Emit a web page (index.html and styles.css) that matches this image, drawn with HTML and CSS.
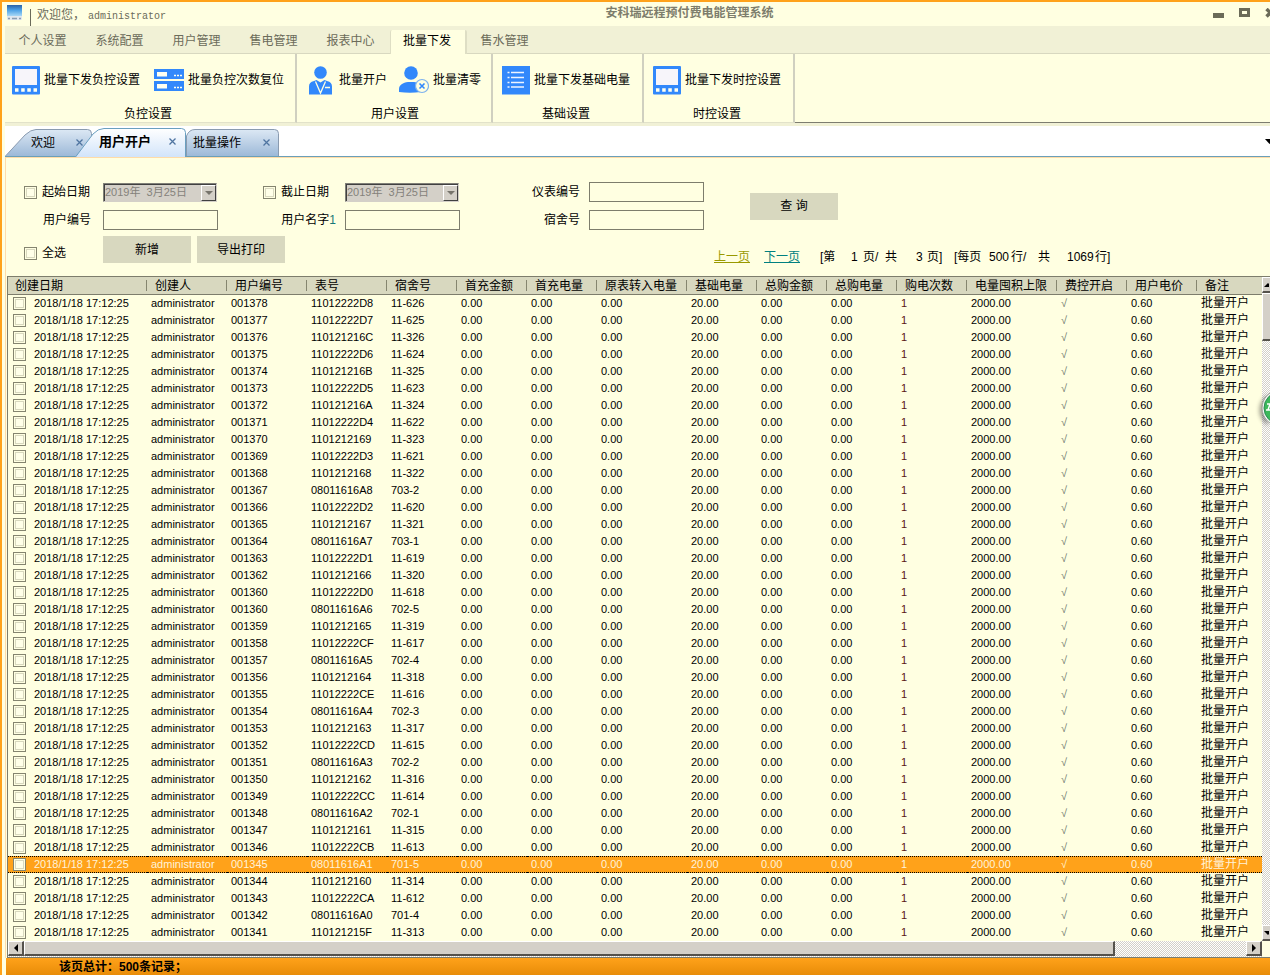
FILE: index.html
```html
<!DOCTYPE html>
<html lang="zh-CN">
<head>
<meta charset="utf-8">
<title>安科瑞远程预付费电能管理系统</title>
<link rel="stylesheet" href="styles.css">
</head>
<body>
<div class="app">
  <header class="titlebar">
    <svg class="app-icon" width="16" height="16" viewBox="0 0 16 16">
      <defs><linearGradient id="scr" x1="0" y1="0" x2="0" y2="1"><stop offset="0" stop-color="#2a62a8"/><stop offset=".45" stop-color="#4aa0e6"/><stop offset="1" stop-color="#a8d8f6"/></linearGradient></defs>
      <rect x="0" y="0" width="15" height="15" rx="1" fill="#dfe7ef"/>
      <rect x="0" y="0" width="15" height="11" fill="url(#scr)"/>
      <path d="M1 13.500h2M5 13.500h5M12 13.500h2" stroke="#8a9db0" stroke-width="1.500"/>
    </svg>
    <span class="welcome">欢迎您，<span class="user">administrator</span></span>
    <h1 class="title">安科瑞远程预付费电能管理系统</h1>
    <div class="window-controls">
      <button type="button" aria-label="最小化"><svg width="11" height="10"><rect y="5" width="11" height="5" fill="#6b6b58"/></svg></button>
      <button type="button" aria-label="最大化"><svg width="11" height="10"><path d="M0 0h11v9H0zM3 3v3h5V3z" fill-rule="evenodd" fill="#6b6b58"/></svg></button>
      <button type="button" aria-label="关闭"><svg width="11" height="10"><path d="M1.500 1l8 7.500M9.500 1l-8 7.500" stroke="#6b6b58" stroke-width="3.500"/></svg></button>
    </div>
  </header>

  <nav class="menu">
    <button type="button">个人设置</button>
    <button type="button">系统配置</button>
    <button type="button">用户管理</button>
    <button type="button">售电管理</button>
    <button type="button">报表中心</button>
    <button type="button" class="active">批量下发</button>
    <button type="button">售水管理</button>
  </nav>

  <svg class="defs" width="0" height="0">
    <symbol id="i-panel" viewBox="0 0 28 29"><rect width="28" height="28.500" rx="1" fill="#3288fb"/><rect x="3" y="3" width="22" height="16" fill="#f7f5fa"/><path d="M3 24h3.500M9.200 24h3.500M15.300 24h3.500M21.500 24H25" stroke="#fffff0" stroke-width="3.500"/></symbol>
    <symbol id="i-server" viewBox="0 0 30 22"><rect width="30" height="10" fill="#3288fb"/><rect y="12" width="30" height="10" fill="#3288fb"/><path d="M3 3h10v4.500H3zM3 15h10v4.500H3z" fill="#fffff0"/><path d="M20 6.500h2M23 6.500h2M26 6.500h2M20 18.500h2M23 18.500h2M26 18.500h2" stroke="#fffff0" stroke-width="1.500"/></symbol>
    <symbol id="i-person" viewBox="0 0 26 29"><circle cx="11.500" cy="6.500" r="6.300" fill="#3288fb"/><path d="M0 28.500v-8c0-3 1.500-4.500 5-5.500l2.500-1 4 2.500 4-2.500 2.500 1c3.500 1 5 2.500 5 5.500v8z" fill="#3288fb"/><path d="M6.500 15.500L11.500 27l5-11.500M16 21.500h5" fill="none" stroke="#ffffe1" stroke-width="1.300"/></symbol>
    <symbol id="i-clear" viewBox="0 0 30 28"><circle cx="12" cy="7" r="6.800" fill="#3288fb"/><path d="M0 26v-3c0-4 4-6.500 9-7h6c4 .500 7 2.500 7 7v3q-11 1.500-22 0z" fill="#3288fb"/><circle cx="23" cy="20" r="6.500" fill="#ffffe1" stroke="#7db2ee" stroke-width="1.200"/><path d="M20.500 17.500l5 5M25.500 17.500l-5 5" stroke="#3288fb" stroke-width="1.600"/></symbol>
    <symbol id="i-list" viewBox="0 0 28 29"><rect width="28" height="28.500" fill="#3288fb"/><path d="M5.500 6.500h2M9 6.500h13M5.500 11.500h2M9 11.500h13M5.500 16.500h2M9 16.500h13M5.500 21h2M9 21h13" stroke="#eef4ff" stroke-width="1.300"/></symbol>
  </svg>

  <section class="ribbon">
    <div class="group load">
      <div class="tools">
        <button type="button"><svg width="28" height="29"><use href="#i-panel"/></svg>批量下发负控设置</button>
        <button type="button"><svg width="30" height="22"><use href="#i-server"/></svg>批量负控次数复位</button>
      </div>
      <div class="group-name">负控设置</div>
    </div>
    <div class="group users">
      <div class="tools">
        <button type="button"><svg width="26" height="29"><use href="#i-person"/></svg>批量开户</button>
        <button type="button"><svg width="30" height="28"><use href="#i-clear"/></svg>批量清零</button>
      </div>
      <div class="group-name">用户设置</div>
    </div>
    <div class="group">
      <div class="tools">
        <button type="button"><svg width="28" height="29"><use href="#i-list"/></svg>批量下发基础电量</button>
      </div>
      <div class="group-name">基础设置</div>
    </div>
    <div class="group">
      <div class="tools">
        <button type="button"><svg width="28" height="29"><use href="#i-panel"/></svg>批量下发时控设置</button>
      </div>
      <div class="group-name">时控设置</div>
    </div>
    <div class="ribbon-rest"></div>
  </section>

  <nav class="tabs">
    <button type="button" class="tab first">
      <svg class="shape" width="87" height="27" viewBox="0 0 87 27"><defs><linearGradient id="tg" x1="0" y1="0" x2="0" y2="1"><stop offset="0" stop-color="#dce8f4"/><stop offset="1" stop-color="#9db9d8"/></linearGradient></defs><path d="M.500 27L20 6Q26 .500 31 .500H82.500Q86.500 .500 86.500 4.500V27" fill="url(#tg)" stroke="#8a9bb0"/></svg>
      <span>欢迎</span><svg class="x" width="7" height="7"><path d="M.500 .500l6 6M6.500 .500l-6 6" stroke="#4f74a0" stroke-width="1.300"/></svg>
    </button>
    <button type="button" class="tab current">
      <svg class="shape" width="111" height="29" viewBox="0 0 111 29"><defs><linearGradient id="ta" x1="0" y1="0" x2="0" y2="1"><stop offset="0" stop-color="#fff"/><stop offset="1" stop-color="#d2e4fa"/></linearGradient></defs><path d="M.500 29L18 6Q23 .500 29 .500H106.500Q110.500 .500 110.500 4.500V29" fill="url(#ta)" stroke="#6a9fc0"/></svg>
      <span>用户开户</span><svg class="x" width="7" height="7"><path d="M.500 .500l6 6M6.500 .500l-6 6" stroke="#4f74a0" stroke-width="1.300"/></svg>
    </button>
    <button type="button" class="tab last">
      <svg class="shape" width="93" height="27" viewBox="0 0 93 27"><path d="M.500 27V7Q3 .500 9 .500H88.500Q92.500 .500 92.500 4.500V27" fill="url(#tg)" stroke="#8a9bb0"/></svg>
      <span>批量操作</span><svg class="x" width="7" height="7"><path d="M.500 .500l6 6M6.500 .500l-6 6" stroke="#4f74a0" stroke-width="1.300"/></svg>
    </button>
    <button type="button" class="tab-more" aria-label="更多"><svg width="5" height="5"><path d="M0 0h9L4.500 5z"/></svg></button>
  </nav>

  <main class="page">
    <form class="filters">
      <label class="check"><input type="checkbox">起始日期</label>
      <div class="date c2"><input type="text" aria-label="起始日期" value="2019年  3月25日" disabled><button type="button" disabled aria-label="选择"><svg width="8" height="4"><path d="M0 0h8L4 4z" fill="#77746c"/></svg></button></div>
      <label class="check c4"><input type="checkbox">截止日期</label>
      <div class="date c5"><input type="text" aria-label="截止日期" value="2019年  3月25日" disabled><button type="button" disabled aria-label="选择"><svg width="8" height="4"><path d="M0 0h8L4 4z" fill="#77746c"/></svg></button></div>
      <label class="name c7" for="meter">仪表编号</label>
      <input class="box c8" id="meter" type="text">
      <button type="button" class="btn query">查 询</button>

      <label class="name c1 r2" for="uid">用户编号</label>
      <input class="box c2 r2" id="uid" type="text">
      <label class="name c4 r2" for="uname">用户名字<span class="one">1</span></label>
      <input class="box c5 r2" id="uname" type="text">
      <label class="name c7 r2" for="room">宿舍号</label>
      <input class="box c8 r2" id="room" type="text">

      <label class="check all"><input type="checkbox">全选</label>
      <div class="actions">
        <button type="button" class="btn">新增</button>
        <button type="button" class="btn">导出打印</button>
      </div>
      <div class="pager">
        <a href="#" class="prev">上一页</a><a href="#" class="next">下一页</a>
        <span>[第</span><span>1</span><span>页/</span><span>共</span><span>3</span><span>页]</span>
        <span>[每页</span><span>500</span><span>行/</span><span>共</span><span>1069</span><span>行]</span>
      </div>
    </form>

    <section class="grid">
      <div class="grid-view">
        <table>
          <colgroup>
            <col class="w140"><col class="w80"><col class="w80"><col class="w80"><col class="w70"><col class="w70"><col class="w70"><col class="w90"><col class="w70"><col class="w70"><col class="w70"><col class="w70"><col class="w90"><col class="w70"><col class="w70"><col>
          </colgroup>
          <thead><tr><th>创建日期</th><th>创建人</th><th>用户编号</th><th>表号</th><th>宿舍号</th><th>首充金额</th><th>首充电量</th><th>原表转入电量</th><th>基础电量</th><th>总购金额</th><th>总购电量</th><th>购电次数</th><th>电量囤积上限</th><th>费控开启</th><th>用户电价</th><th>备注</th></tr></thead>
          <tbody id="rows"></tbody>
        </table>
      </div>
      <div class="vscroll">
        <button type="button" class="sb" aria-label="向上"><svg width="5" height="4"><path d="M4 0l4 4H0z"/></svg></button>
        <div class="thumb"></div>
        <button type="button" class="sb end" aria-label="向下"><svg width="5" height="4"><path d="M0 0h8L4 4z"/></svg></button>
        <div class="badge"><svg width="9" height="38" viewBox="0 0 9 38"><circle cx="19" cy="19" r="18" fill="#f4f6f2" stroke="#9a9e96"/><circle cx="19" cy="19" r="16" fill="#3cb95a" stroke="#2c8a55"/><path d="M6 15h6M5 21h6M9 15l-2 6" stroke="#fff" stroke-width="1.500"/></svg></div>
      </div>
      <div class="hscroll">
        <button type="button" class="sb" aria-label="向左"><svg width="4" height="8"><path d="M4 0v8L0 4z"/></svg></button>
        <div class="thumb"></div>
        <button type="button" class="sb end" aria-label="向右"><svg width="4" height="8"><path d="M0 0v8l4-4z"/></svg></button>
      </div>
    </section>
  </main>

  <footer class="status">该页总计：500条记录；</footer>
</div>
<script src="app.js"></script>
</body>
</html>
```

FILE: styles.css
```css
* { box-sizing: border-box; }

body {
  margin: 0;
  background: #ffffe1;
  color: #000;
  font: 12px/16px "Liberation Sans", "Noto Sans CJK SC", sans-serif;
}

button, input {
  margin: 0;
  padding: 0;
  border: 0;
  border-radius: 0;
  background: none;
  color: inherit;
  font: inherit;
}

svg { display: block; }

.defs { position: absolute; }

.app {
  display: flex;
  flex-direction: column;
  min-height: 100vh;
  overflow: hidden;
  border-top: 2px solid #ffa21a;
  border-left: 2px solid #ffa21a;
}

/* title bar */
.titlebar {
  display: flex;
  height: 24px;
  padding-left: 5px;
  overflow: hidden;
  color: #6b6b5a;
}

.app-icon { margin-top: 3px; }

.welcome {
  height: 17px;
  margin: 7px 0 0 7px;
  padding-left: 6px;
  border-left: 1px solid #6b6b5a;
  line-height: 12px;
  white-space: nowrap;
}

.user {
  margin-left: 3px;
  font: 10px/12px "Liberation Mono", monospace;
}

.title {
  flex: 1;
  margin: 3px 0 0;
  color: #7d7d6c;
  font-size: 12px;
  line-height: 16px;
  text-align: center;
}

.window-controls {
  display: flex;
  gap: 15px;
  margin-top: 6px;
  margin-right: -6px;
}

.window-controls button { height: 10px; }

/* main menu */
.menu {
  display: flex;
  align-items: flex-end;
  height: 28px;
  margin-left: 3px;
  background: #f1f1d6;
  box-shadow: inset 0 -1px #d8d8c0;
}

.menu button {
  width: 77px;
  height: 24px;
  padding: 0 2px 3px 0;
  color: #6b6b5a;
}

.menu .active {
  border: 1px solid #dedec4;
  border-width: 0 2px 0 1px;
  border-radius: 2px 2px 0 0;
  background: #ffffe1;
  color: #000;
}

/* ribbon */
.ribbon {
  display: flex;
  margin-left: 3px;
  border-bottom: 3px solid #f1f1d6;
}

.group {
  display: flex;
  flex-direction: column;
  padding: 10px 12px 0 9px;
  border-right: 2px solid #d0d0c0;
  border-bottom: 1px solid #e2e2ca;
}

.load { padding: 10px 11px 0 7px; }
.users { padding: 10px 10px 0 12px; }

.tools {
  display: flex;
  gap: 12px;
  height: 32px;
}

.load .tools { gap: 14px; }

.tools button {
  display: flex;
  align-items: center;
  gap: 4px;
  white-space: nowrap;
}

.group-name {
  margin-top: 10px;
  text-align: center;
}

.ribbon-rest {
  flex: 1;
  border-bottom: 1px solid #7d7d70;
}

/* document tabs */
.tabs {
  display: flex;
  align-items: flex-end;
  height: 31px;
  margin-left: 3px;
  border-bottom: 1px solid #6a9fb8;
  background: #fff;
}

.tab {
  position: relative;
  display: flex;
  align-items: center;
  justify-content: space-between;
  height: 27px;
  white-space: nowrap;
}

.tab .shape {
  position: absolute;
  left: 0;
  bottom: 0;
}

.tab span, .tab .x { position: relative; }

.first { width: 87px; padding: 0 9px 0 26px; }

.current {
  z-index: 1;
  width: 111px;
  height: 29px;
  margin: 0 0 -1px -17px;
  padding: 0 10px 2px 24px;
  font-size: 13px;
  font-weight: bold;
}

.last { width: 93px; padding: 0 9px 0 7px; }

.tab-more { margin: 0 0 12px auto; }

/* filter form */
.page {
  display: flex;
  flex: 1;
  flex-direction: column;
  margin-left: 3px;
  border-top: 1px solid #ffdca8;
  border-left: 1px solid #ffdca8;
}

.filters {
  display: grid;
  grid-template-columns: 79px 115px 45px 82px 115px 72px 57px 115px 46px 88px 1fr;
  grid-template-rows: 28px 28px 31px;
  align-items: center;
  padding: 20px 0 11px 18px;
}

.c2 { grid-column: 2; }
.c4 { grid-column: 4; }
.c5 { grid-column: 5; }
.c7 { grid-column: 7; }
.c8 { grid-column: 8; }
.r2 { grid-row: 2; }

.check {
  display: flex;
  align-items: center;
  gap: 5px;
}

.all {
  grid-row: 3;
  align-self: end;
  padding-bottom: 4px;
}

.name {
  padding-right: 9px;
  text-align: right;
  white-space: nowrap;
}

.c1 { padding-right: 12px; }

.one { color: #167878; }

input[type="checkbox"] {
  flex: none;
  width: 13px;
  height: 13px;
  appearance: none;
  border: 1px solid #84846f;
  background: #ffffe8;
  box-shadow: inset 0 0 0 1px #ffffe1, inset 0 0 0 2px #d8d8bf;
}

.box {
  width: 100%;
  height: 20px;
  padding: 0 3px;
  border: 1px solid #7d7d6c;
}

.date {
  display: flex;
  width: 114px;
  height: 19px;
  border: 1px solid #808078;
  border-right-color: #d4d0c8;
  border-bottom-color: #d4d0c8;
  background: #d4d0c8;
  box-shadow: inset 1px 1px #404040;
}

.date input {
  flex: 1;
  width: 0;
  padding-left: 1px;
  color: #85827b;
  font-size: 11px;
}

.date button {
  display: grid;
  place-items: center;
  width: 15px;
  margin: 1px 0 0;
  border: 1px solid #fff;
  border-right-color: #404040;
  border-bottom-color: #404040;
}

.btn {
  width: 88px;
  height: 27px;
  background: #d8d8bf;
}

.query {
  grid-row: 1 / 3;
  grid-column: 10;
}

.actions {
  display: flex;
  grid-row: 3;
  grid-column: 2 / 7;
  gap: 6px;
}

.pager {
  display: grid;
  grid-row: 3;
  grid-column: 9 / 12;
  grid-template-columns: 50px 56px 31px 12px 22px 31px 11px 27px 35px 22px 27px 29px 28px auto;
  align-self: end;
  justify-content: start;
  padding-left: 10px;
  white-space: nowrap;
}

.prev { color: #999900; }
.next { color: #008080; }

/* data grid */
.grid {
  display: grid;
  flex: 1;
  grid-template-columns: minmax(0, 1fr) 8px;
  grid-template-rows: 1fr 16px;
  margin-left: 1px;
  border: 1px solid #7d7d6c;
  border-width: 1px 0 1px 1px;
}

.grid-view { overflow: hidden; }

table {
  width: 100%;
  table-layout: fixed;
  border-collapse: separate;
  border-spacing: 0;
}

.w70 { width: 70px; }
.w80 { width: 80px; }
.w90 { width: 90px; }
.w140 { width: 139px; }

th {
  height: 18px;
  padding: 1px 0 0 8px;
  border-bottom: 1px solid #7d7d6c;
  background: linear-gradient(#85856f, #85856f) no-repeat right 3px / 1px 11px #d8d8bf;
  font-weight: normal;
  line-height: 16px;
  text-align: left;
  white-space: nowrap;
}

th:first-child { padding-left: 7px; }
th:last-child { background-image: none; }

td {
  height: 17px;
  padding: 0 0 0 4px;
  border: 1px solid transparent;
  border-width: 1px 0;
  font-size: 11px;
  line-height: 15px;
  white-space: nowrap;
}

td:first-child { padding-left: 5px; }
td:last-child { font-size: 12px; }

.created {
  display: flex;
  align-items: center;
  gap: 8px;
}

.tick { color: #6a7468; }
.count { color: #5a1414; }

.selected td {
  border-color: #000;
  border-style: dotted;
  background: #ffa21a;
  color: #fff2d8;
}

/* scroll bars */
.vscroll, .hscroll {
  display: flex;
  background: repeating-conic-gradient(#fff 0 25%, #d4d0c8 0 50%) 0 0 / 2px 2px;
}

.vscroll {
  position: relative;
  flex-direction: column;
}

.sb {
  display: grid;
  flex: none;
  place-items: center;
  width: 16px;
  height: 15px;
}

.sb, .thumb {
  border: 1px solid #fff;
  border-right: 2px solid #55524c;
  border-bottom: 2px solid #55524c;
  background: #d4d0c8;
}

.vscroll .sb {
  width: 100%;
  height: 16px;
  border-right: 0;
}

.vscroll .thumb {
  height: 48px;
  border-right: 0;
}

.hscroll .sb, .hscroll .thumb { height: 15px; }

.hscroll .thumb { width: 87%; }

.end { margin-left: auto; }

.vscroll .end { margin: auto 0 0; }

.badge {
  position: absolute;
  top: 112px;
  right: 0;
  filter: drop-shadow(-2px 2px 2px #0006);
}

/* status bar */
.status {
  height: 17px;
  margin-left: 4px;
  padding-left: 53px;
  background: linear-gradient(#ffa21a, #e88c08);
  font-weight: bold;
  line-height: 18px;
}
```

FILE: app.js
```js
// user number, meter number, room
const accounts = `001378 11012222D8 11-626
001377 11012222D7 11-625
001376 110121216C 11-326
001375 11012222D6 11-624
001374 110121216B 11-325
001373 11012222D5 11-623
001372 110121216A 11-324
001371 11012222D4 11-622
001370 1101212169 11-323
001369 11012222D3 11-621
001368 1101212168 11-322
001367 08011616A8 703-2
001366 11012222D2 11-620
001365 1101212167 11-321
001364 08011616A7 703-1
001363 11012222D1 11-619
001362 1101212166 11-320
001360 11012222D0 11-618
001360 08011616A6 702-5
001359 1101212165 11-319
001358 11012222CF 11-617
001357 08011616A5 702-4
001356 1101212164 11-318
001355 11012222CE 11-616
001354 08011616A4 702-3
001353 1101212163 11-317
001352 11012222CD 11-615
001351 08011616A3 702-2
001350 1101212162 11-316
001349 11012222CC 11-614
001348 08011616A2 702-1
001347 1101212161 11-315
001346 11012222CB 11-613
001345 08011616A1 701-5
001344 1101212160 11-314
001343 11012222CA 11-612
001342 08011616A0 701-4
001341 110121215F 11-313`.split("\n").map(line => line.split(" "));

const selectedUser = "001345";

document.getElementById("rows").innerHTML = accounts.map(([user, meter, room]) => `
<tr${user === selectedUser ? ' class="selected"' : ""}>
<td><label class="created"><input type="checkbox">2018/1/18 17:12:25</label></td>
<td>administrator</td><td>${user}</td><td>${meter}</td><td>${room}</td>
<td>0.00</td><td>0.00</td><td>0.00</td><td>20.00</td><td>0.00</td><td>0.00</td>
<td${user === selectedUser ? "" : ' class="count"'}>1</td><td>2000.00</td><td${user === selectedUser ? "" : ' class="tick"'}>√</td><td>0.60</td><td>批量开户</td>
</tr>`).join("");
```
